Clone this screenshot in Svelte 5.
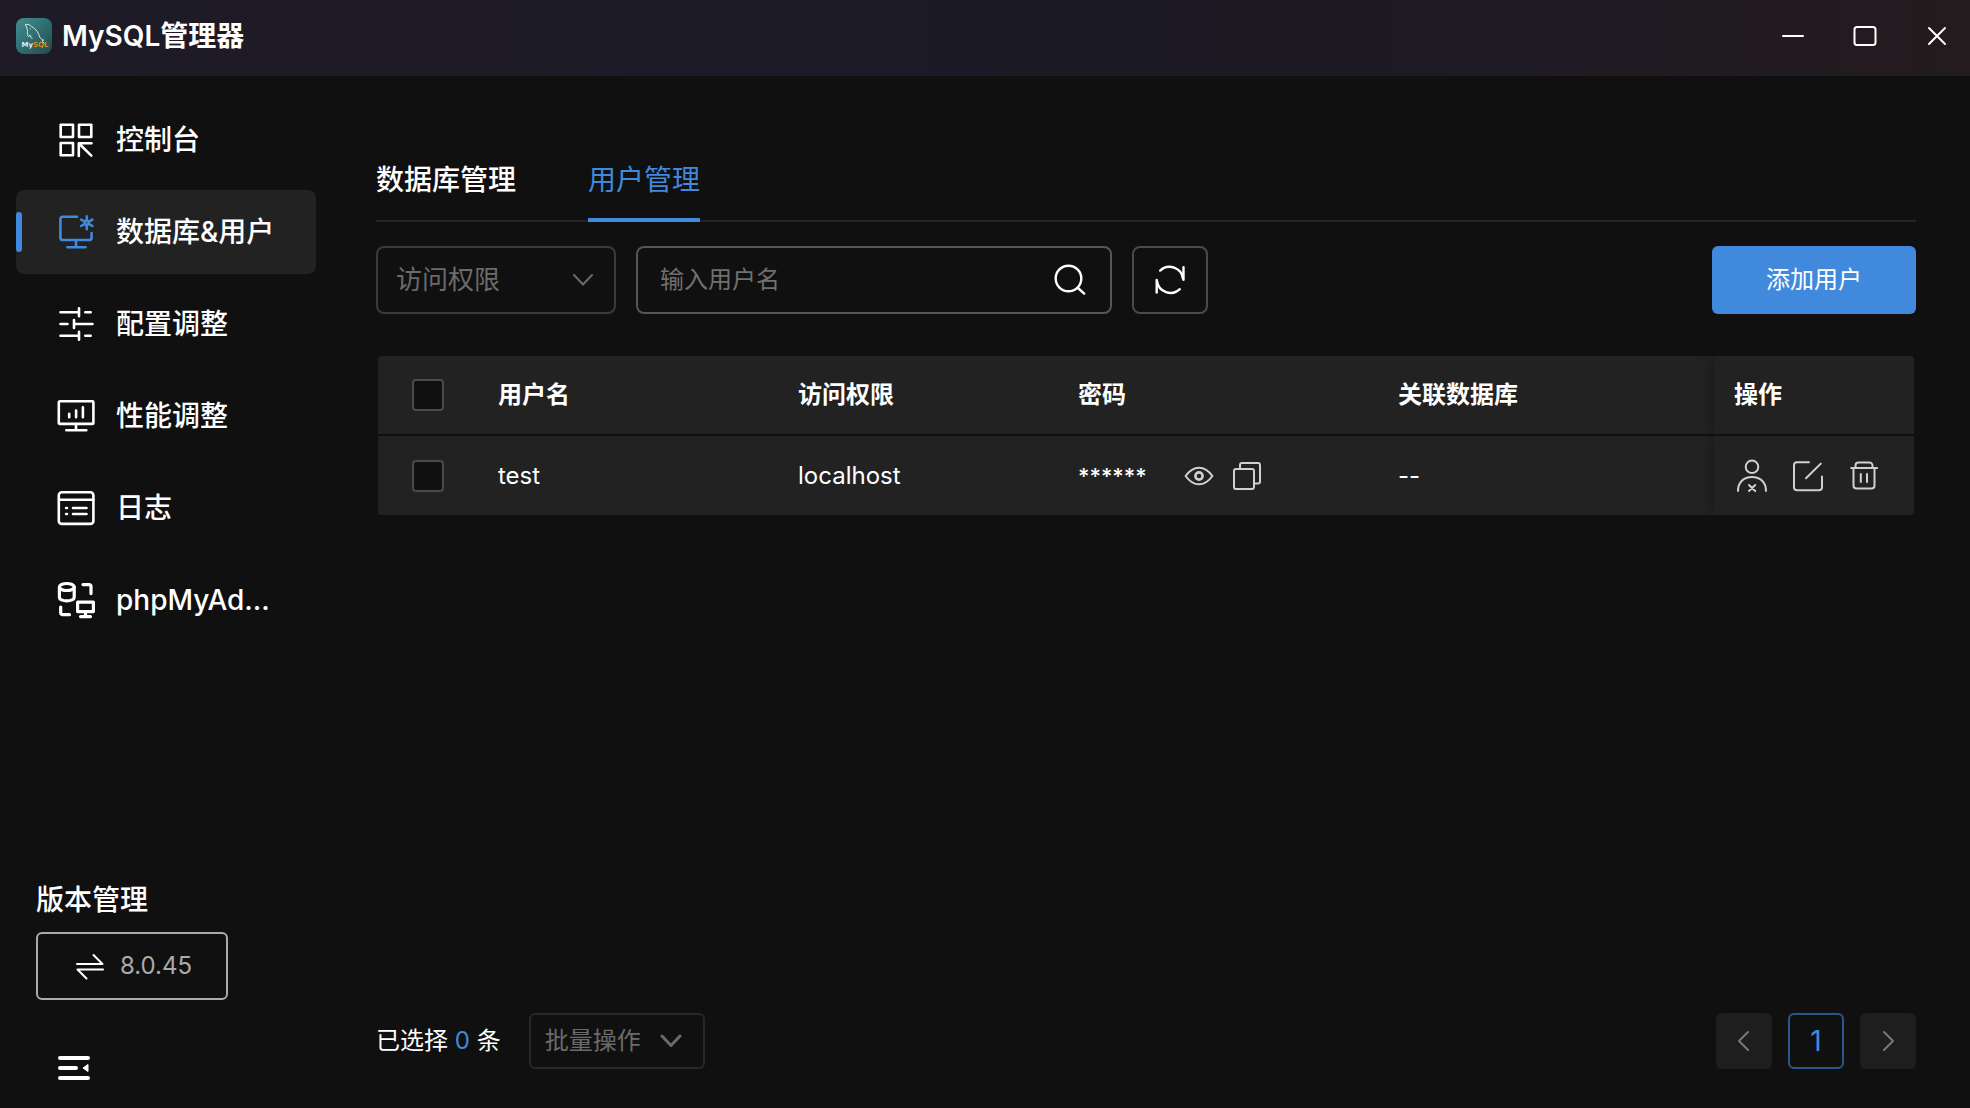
<script lang="ts">
	const menu = [
		{ id: 'dashboard', label: '控制台' },
		{ id: 'database', label: '数据库&用户' },
		{ id: 'config', label: '配置调整' },
		{ id: 'performance', label: '性能调整' },
		{ id: 'logs', label: '日志' },
		{ id: 'phpmyadmin', label: 'phpMyAd...' }
	];
	const tabs = ['数据库管理', '用户管理'];

	let activeMenu = $state('database');
	let activeTab = $state('用户管理');
	let keyword = $state('');
	let users = $state([
		{ name: 'test', host: 'localhost', password: '******', database: '--', checked: false }
	]);
	let selected = $derived(users.filter((u) => u.checked).length);

	function toggleAll(e: Event) {
		const checked = (e.currentTarget as HTMLInputElement).checked;
		users.forEach((u) => (u.checked = checked));
	}
</script>

<svelte:head>
	<title>MySQL管理器</title>
</svelte:head>

{#snippet menuIcon(id: string)}
	<svg class="icon menu-icon" viewBox="-2 -2 40 40" aria-hidden="true">
		{#if id === 'dashboard'}
			<rect x="2.7" y="2.7" width="12.3" height="12.3" />
			<rect x="21" y="2.7" width="12.3" height="12.3" />
			<rect x="2.7" y="21" width="12.3" height="12.3" />
			<path d="M33.5 21.2H20.8V34M21.5 22 33.3 33.6" />
		{:else if id === 'database'}
			<path d="M19 2.8H5a2.6 2.6 0 0 0-2.6 2.6v18A2.6 2.6 0 0 0 5 26h26a2.6 2.6 0 0 0 2.6-2.6V19M18 26v7M9.5 33.2h18" />
			<circle cx="28.8" cy="8.8" r="2" />
			<path d="M28.8 6.5V2.4M28.8 11v4.2M26.8 7.7l-3.6-2.1M30.8 7.7l3.6-2.1M26.8 9.9 23.2 12M30.8 9.9l3.6 2.1" />
		{:else if id === 'config'}
			<path d="M2.5 6.3H21M21 2.3v8M27.3 6.3h5.4M2.5 18h7M16 14v8M16 18h18.5M2.5 29.7H21M21 25.7v8M27.3 29.7h5.4" />
		{:else if id === 'performance'}
			<rect x=".8" y="3.3" width="34.6" height="22.6" rx="1" />
			<path d="M11.2 15.8v3.5M18.1 12.5v6.8M24.9 9.2v10.1M18 26v6.2M8.3 32.3h20" />
		{:else if id === 'logs'}
			<rect x=".8" y="2.3" width="34.6" height="31.6" rx="3" />
			<path d="M1 9.7h34.4M8.1 18h.9M15 18h13.5M8.1 24h.9M15 24h13.5" />
		{:else}
			<g stroke-width="3.2">
				<ellipse cx="8.8" cy="5" rx="7.4" ry="3.5" />
				<path d="M1.4 5v10.4c0 2 3.3 3.5 7.4 3.5s7.4-1.5 7.4-3.5V5" />
				<path d="M25 2.6h6a2 2 0 0 1 2 2v7M2.7 25v5.7a2 2 0 0 0 2 2h6.8" />
				<path d="M19.6 20.2h15.8v9.4H19.6zM27.5 30v4.5M22.5 34.6h10" />
			</g>
		{/if}
	</svg>
{/snippet}

<div class="app">
	<header>
		<svg class="logo" viewBox="0 0 36 36" aria-hidden="true">
			<defs>
				<linearGradient id="logo-bg" x1="0" y1="0" x2="1" y2="1">
					<stop offset="0" stop-color="#3f8f92" />
					<stop offset=".55" stop-color="#2f6a6c" />
					<stop offset="1" stop-color="#27474a" />
				</linearGradient>
			</defs>
			<rect width="36" height="36" rx="8" fill="url(#logo-bg)" />
			<path
				d="M9.4 6.6c2-1 4.7.3 6.3 2 4.5 2.3 6.8 6.4 8.2 10.7.6 1.4 1.7 1.8 3.9 2.9-1.5.2-2.2.6-1.5 1.3l2.3 2.1M9.4 6.6c.4 2 1.8 3.3 2.1 5.2.1 2-.6 4.3.4 6 .6 1.2 1.3 1.2 1.9-.9.6 1.7 1.6 3 2.6 4.1M14.2 10.5l.8.8"
				fill="none"
				stroke="#dbe8e8"
				stroke-width="1"
			/>
			<text x="5.5" y="29" class="logo-text">My<tspan fill="#d08c1c">SQL</tspan></text>
		</svg>
		<h1>MySQL管理器</h1>
		<div class="window-controls">
			<button aria-label="最小化">
				<svg class="icon" viewBox="0 0 40 40"><path d="M10 20h20" /></svg>
			</button>
			<button aria-label="最大化">
				<svg class="icon" viewBox="0 0 40 40"><rect x="9.5" y="11" width="21" height="18" rx="2.5" /></svg>
			</button>
			<button aria-label="关闭">
				<svg class="icon" viewBox="0 0 40 40"><path d="m12 12 16 16M28 12 12 28" /></svg>
			</button>
		</div>
	</header>

	<div class="body">
		<aside>
			<nav>
				{#each menu as item}
					<button
						class="menu-item"
						class:active={activeMenu === item.id}
						onclick={() => (activeMenu = item.id)}
					>
						{@render menuIcon(item.id)}
						<span>{item.label}</span>
					</button>
				{/each}
			</nav>

			<div class="version">
				<h2>版本管理</h2>
				<button class="version-button">
					<svg class="icon" viewBox="0 0 28 28" aria-hidden="true">
						<path d="M1 12h25.5L17.5 3M27 17.5H1.5l9 9" />
					</svg>
					8.0.45
				</button>
			</div>
			<button class="collapse" aria-label="收起菜单">
				<svg viewBox="0 0 32 24" aria-hidden="true">
					<path d="M2 2h28M2 12h16M2 22h28" fill="none" stroke="#fff" stroke-width="4" stroke-linecap="round" />
					<path d="M25 12l5-3.5v7z" fill="#fff" stroke="#fff" stroke-linejoin="round" />
				</svg>
			</button>
		</aside>

		<main>
			<div class="tabs" role="tablist">
				{#each tabs as tab}
					<button
						role="tab"
						aria-selected={activeTab === tab}
						class:active={activeTab === tab}
						onclick={() => (activeTab = tab)}>{tab}</button
					>
				{/each}
			</div>

			<div class="toolbar">
				<div class="select access">
					<select aria-label="访问权限">
						<option>访问权限</option>
					</select>
					<svg class="icon" viewBox="0 0 20 12" aria-hidden="true"><path d="m1 1 9 9.5L19 1" /></svg>
				</div>
				<div class="search">
					<input type="text" placeholder="输入用户名" aria-label="输入用户名" bind:value={keyword} />
					<button aria-label="搜索">
						<svg class="icon" viewBox="0 0 32 32">
							<circle cx="14.5" cy="14.5" r="12.8" />
							<path d="m24 24 6.2 5.6" />
						</svg>
					</button>
				</div>
				<button class="refresh" aria-label="刷新">
					<svg class="icon" viewBox="0 0 32 32">
						<path d="M6.2 6.6A13.6 13.6 0 0 1 29 14.8M29.5 3.2v12.5M25.8 25.2A13.6 13.6 0 0 1 3 17.2M2.7 16v12.5" />
					</svg>
				</button>
				<button class="add">添加用户</button>
			</div>

			<table>
				<colgroup>
					<col class="col-check" />
					<col class="col-name" />
					<col class="col-host" />
					<col class="col-password" />
					<col />
					<col class="col-actions" />
				</colgroup>
				<thead>
					<tr>
						<th class="check"><input type="checkbox" aria-label="全选" onchange={toggleAll} /></th>
						<th>用户名</th>
						<th>访问权限</th>
						<th>密码</th>
						<th>关联数据库</th>
						<th class="fixed">操作</th>
					</tr>
				</thead>
				<tbody>
					{#each users as user}
						<tr>
							<td class="check">
								<input type="checkbox" aria-label={user.name} bind:checked={user.checked} />
							</td>
							<td>{user.name}</td>
							<td>{user.host}</td>
							<td>
								<div class="password">
									<span>{user.password}</span>
									<button aria-label="显示密码">
										<svg class="icon" viewBox="0 0 32 32">
											<path d="M2.6 16C6.5 10.5 11 7.7 16 7.7s9.5 2.8 13.4 8.3C25.5 21.5 21 24.3 16 24.3S6.5 21.5 2.6 16z" />
											<circle cx="16" cy="16" r="3.6" stroke-width="2.6" />
										</svg>
									</button>
									<button aria-label="复制密码">
										<svg class="icon" viewBox="0 0 32 32">
											<rect x="3" y="9" width="20" height="20" rx="2" />
											<path d="M9 8.5V5a2 2 0 0 1 2-2h16a2 2 0 0 1 2 2v16.5a2 2 0 0 1-2 2h-3.5" />
										</svg>
									</button>
								</div>
							</td>
							<td>{user.database}</td>
							<td class="fixed">
								<div class="actions">
									<button aria-label="权限">
										<svg class="icon" viewBox="0 0 36 36">
											<circle cx="18" cy="8.8" r="6.3" />
											<path d="M4 33c0-8.5 5.5-14 14-14s14 5.5 14 14M15 27l6.2 6M21.2 27 15 33" />
										</svg>
									</button>
									<button aria-label="编辑">
										<svg class="icon" viewBox="0 0 36 36">
											<path d="M19 4.2H7a3 3 0 0 0-3 3v22a3 3 0 0 0 3 3h22a3 3 0 0 0 3-3V18.5M16 20.2 30.8 5.6" />
										</svg>
									</button>
									<button aria-label="删除">
										<svg class="icon" viewBox="0 0 36 36">
											<path d="M5.2 10h26M9.5 10V7.5a3 3 0 0 1 3-3h11a3 3 0 0 1 3 3V10M7.5 10v17.5a3 3 0 0 0 3 3h15a3 3 0 0 0 3-3V10M14.8 16v8M21 16v8" />
										</svg>
									</button>
								</div>
							</td>
						</tr>
					{/each}
				</tbody>
			</table>

			<footer>
				<p>已选择 <b>{selected}</b> 条</p>
				<div class="select batch">
					<select aria-label="批量操作" disabled={selected === 0}>
						<option>批量操作</option>
					</select>
					<svg class="icon" viewBox="0 0 22 14" aria-hidden="true"><path d="m2 2 9 9.5L20 2" /></svg>
				</div>
				<div class="pager">
					<button aria-label="上一页" disabled>
						<svg class="icon" viewBox="0 0 12 20"><path d="m10 1-9 9 9 9" /></svg>
					</button>
					<button class="current" aria-current="page">1</button>
					<button aria-label="下一页" disabled>
						<svg class="icon" viewBox="0 0 12 20"><path d="m2 1 9 9-9 9" /></svg>
					</button>
				</div>
			</footer>
		</main>
	</div>
</div>

<style>
	:global(body) {
		background: #101010;
	}

	.app {
		display: flex;
		flex-direction: column;
		min-height: 100vh;
		color: #fff;
		font-family: Inter, 'Noto Sans CJK SC', sans-serif;
		font-size: 24px;
		line-height: 32px;
	}

	.app * {
		box-sizing: border-box;
	}

	button {
		display: flex;
		align-items: center;
		justify-content: center;
		padding: 0;
		border: 0;
		background: none;
		color: inherit;
		font: inherit;
		cursor: pointer;
	}

	.icon {
		display: block;
		flex: none;
		fill: none;
		stroke: currentColor;
		stroke-width: 2;
		stroke-linecap: round;
		stroke-linejoin: round;
	}

	header {
		display: flex;
		align-items: center;
		height: 76px;
		padding: 0 13px 4px 16px;
		background: linear-gradient(90deg, #1e1b27 0%, #1c1a26 50%, #1f1a23 80%, #231b1e 100%);
	}

	.logo {
		width: 36px;
		height: 36px;
	}

	.logo-text {
		font-family: 'DejaVu Sans', sans-serif;
		font-size: 7px;
		font-weight: 700;
		fill: #e6eeee;
	}

	h1 {
		margin: 0 0 0 10px;
		font-size: 28px;
		font-weight: 600;
	}

	.window-controls {
		display: flex;
		gap: 32px;
		margin-left: auto;
	}

	.window-controls svg {
		width: 40px;
		height: 40px;
	}

	.body {
		display: flex;
		flex: 1;
	}

	aside {
		display: flex;
		flex-direction: column;
		flex: none;
		width: 332px;
		padding: 22px 16px 28px;
	}

	nav {
		display: flex;
		flex-direction: column;
		gap: 8px;
	}

	.menu-item {
		position: relative;
		justify-content: flex-start;
		gap: 20px;
		height: 84px;
		padding-left: 40px;
		border-radius: 8px;
		font-size: 28px;
		font-weight: 500;
	}

	.menu-item.active {
		background: #222;
	}

	.menu-item.active::before {
		content: '';
		position: absolute;
		left: 0;
		width: 6px;
		height: 40px;
		border-radius: 3px;
		background: #4189dd;
	}

	.menu-item.active svg {
		color: #4189dd;
	}

	.menu-icon {
		width: 40px;
		height: 40px;
		stroke-width: 2.6;
	}

	.version {
		margin-top: auto;
		padding-left: 20px;
	}

	h2 {
		margin: 0 0 16px;
		font-size: 28px;
		font-weight: 500;
	}

	.version-button {
		gap: 16px;
		width: 192px;
		height: 68px;
		padding-left: 4px;
		border: 2px solid #aaa;
		border-radius: 6px;
		color: #aaa;
	}

	.version-button svg {
		width: 28px;
		height: 28px;
		color: #fff;
	}

	.collapse {
		width: 32px;
		height: 24px;
		margin: 56px 0 0 42px;
	}

	.collapse svg {
		width: 32px;
		height: 24px;
	}

	main {
		display: flex;
		flex: 1;
		flex-direction: column;
		min-width: 0;
		padding: 66px 54px 39px 44px;
	}

	.tabs {
		display: flex;
		gap: 72px;
		height: 80px;
		border-bottom: 2px solid #252525;
	}

	.tabs button {
		height: 80px;
		border-bottom: 4px solid transparent;
		font-size: 28px;
		font-weight: 500;
	}

	.tabs button.active {
		border-color: #4189dd;
		color: #4189dd;
		font-weight: 400;
	}

	.toolbar {
		display: flex;
		gap: 20px;
		height: 68px;
		margin-top: 24px;
	}

	.select {
		position: relative;
		display: flex;
		align-items: center;
		border: 2px solid #3a3a3a;
		border-radius: 8px;
		color: #6b6b6b;
	}

	.select select {
		width: 100%;
		height: 100%;
		padding: 0;
		border: 0;
		background: none;
		color: inherit;
		font: inherit;
		opacity: 1;
		appearance: none;
	}

	.select svg {
		position: absolute;
		pointer-events: none;
	}

	.access {
		width: 240px;
		font-size: 26px;
	}

	.access select {
		padding-left: 18px;
	}

	.access svg {
		right: 21px;
		width: 20px;
		height: 12px;
	}

	.search {
		display: flex;
		align-items: center;
		width: 476px;
		padding: 0 24px 0 22px;
		border: 2px solid #555;
		border-radius: 8px;
	}

	.search input {
		flex: 1;
		min-width: 0;
		padding: 0;
		border: 0;
		outline: 0;
		background: none;
		color: #fff;
		font: inherit;
	}

	.search input::placeholder {
		color: #707070;
		opacity: 1;
	}

	.search svg,
	.refresh svg {
		width: 32px;
		height: 32px;
		stroke-width: 2.4;
	}

	.refresh {
		width: 76px;
		border: 2px solid #4a4a4a;
		border-radius: 8px;
	}

	.add {
		width: 204px;
		margin-left: auto;
		border-radius: 6px;
		background: #4189dd;
	}

	table {
		width: calc(100% - 4px);
		margin: 42px 2px;
		border-spacing: 0;
		border-radius: 4px;
		overflow: hidden;
		table-layout: fixed;
		background: #222;
	}

	.col-check {
		width: 100px;
	}

	.col-name {
		width: 300px;
	}

	.col-host {
		width: 280px;
	}

	.col-password {
		width: 320px;
	}

	.col-actions {
		width: 200px;
	}

	th,
	td {
		height: 79px;
		padding: 0 20px;
		text-align: left;
	}

	th {
		height: 80px;
		border-bottom: 2px solid #101010;
		font-weight: 700;
	}

	.check {
		padding: 0;
		text-align: center;
	}

	.check input {
		display: block;
		width: 32px;
		height: 32px;
		margin: 0 auto;
		border: 2px solid #4a4a4a;
		border-radius: 4px;
		background: #101010;
		appearance: none;
	}

	.check input:checked {
		background: #4189dd;
	}

	.fixed {
		box-shadow: 0 0 14px rgba(0, 0, 0, 0.35);
		clip-path: inset(0 0 0 -14px);
	}

	.password,
	.actions {
		display: flex;
		align-items: center;
		color: #d0d0d0;
	}

	.password {
		gap: 16px;
	}

	.password span {
		margin-right: 20px;
		color: #fff;
		font-size: 22px;
		font-weight: 500;
	}

	.password svg {
		width: 32px;
		height: 32px;
	}

	.actions {
		gap: 20px;
	}

	.actions svg {
		width: 36px;
		height: 36px;
	}

	footer {
		display: flex;
		align-items: center;
		height: 56px;
		margin-top: auto;
	}

	footer p {
		margin: 0;
	}

	footer b {
		color: #4189dd;
		font-weight: 400;
	}

	.batch {
		width: 176px;
		height: 56px;
		margin-left: 28px;
		border-color: #282828;
		border-radius: 6px;
	}

	.batch select {
		padding-left: 14px;
	}

	.batch svg {
		right: 21px;
		width: 22px;
		height: 14px;
		stroke-width: 3;
	}

	.pager {
		display: flex;
		gap: 16px;
		margin-left: auto;
	}

	.pager button {
		width: 56px;
		height: 56px;
		border-radius: 6px;
		background: #1e1e1e;
		color: #777;
		font-size: 28px;
	}

	.pager .current {
		border: 2px solid #2a5689;
		background: none;
		color: #4189dd;
	}

	.pager svg {
		width: 12px;
		height: 20px;
	}
</style>
